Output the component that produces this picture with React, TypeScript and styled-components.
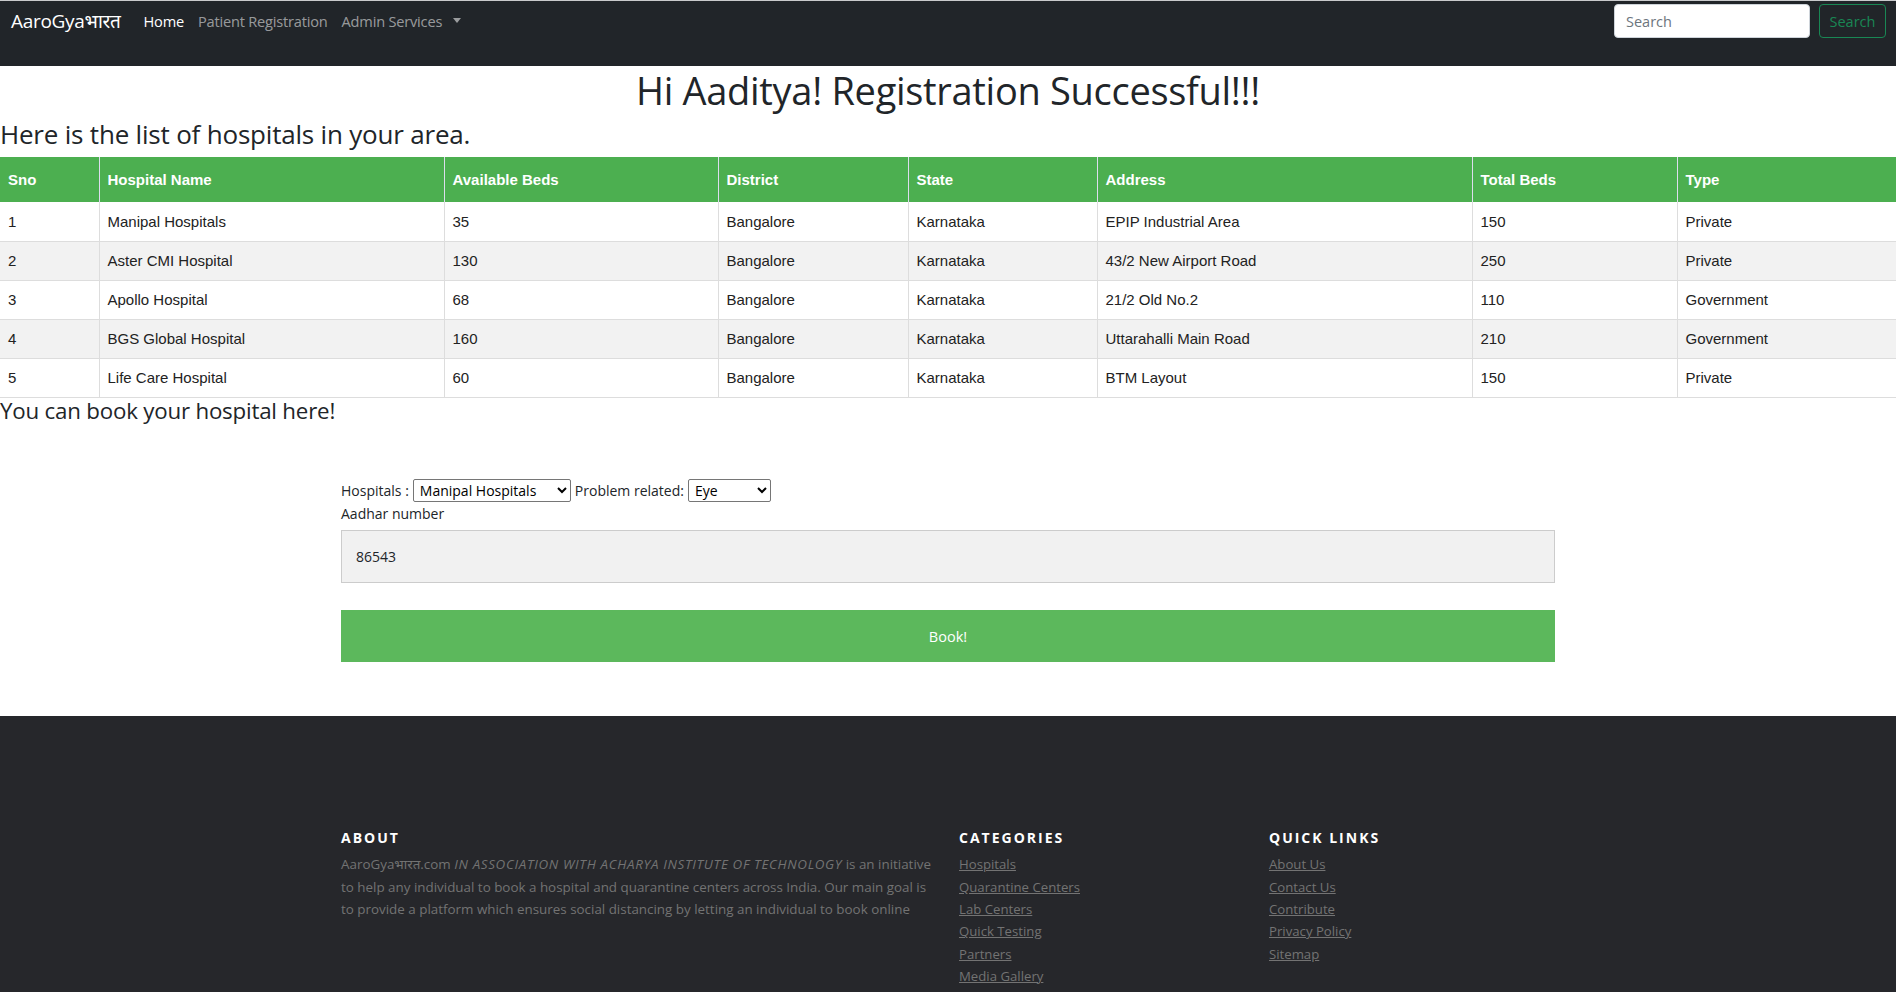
import React from "react";
import styled, { createGlobalStyle } from "styled-components";

const GlobalStyle = createGlobalStyle`
  body {
    margin: 0;
    font-family: "Open Sans", "Noto Sans", Arial, sans-serif;
    color: #212529;
    background: #fff;
    overflow: hidden;
  }
  * { box-sizing: border-box; }
`;

const Navbar = styled.nav`
  height: 66px;
  background: #212529;
  border-top: 1px solid #c9cacc;
  display: flex;
  align-items: flex-start;
  padding: 3px 10px 0 11px;
`;

const Brand = styled.a`
  color: #fff;
  font-size: 19px;
  line-height: 34px;
  margin-right: 16px;
  text-decoration: none;
  letter-spacing: -0.3px;
`;

const NavList = styled.ul`
  display: flex;
  list-style: none;
  margin: 0;
  padding: 0;
`;

const NavLink = styled.a<{ $active?: boolean }>`
  display: flex;
  align-items: center;
  gap: 11px;
  padding: 0 7px;
  line-height: 34px;
  font-size: 14.6px;
  letter-spacing: -0.2px;
  color: ${(p) => (p.$active ? "#fff" : "rgba(255,255,255,0.55)")};
  text-decoration: none;
`;

const Caret = styled.span`
  display: inline-block;
  border-top: 5px solid rgba(255, 255, 255, 0.55);
  border-left: 4.5px solid transparent;
  border-right: 4.5px solid transparent;
  margin-top: -2px;
`;

const SearchForm = styled.form`
  margin-left: auto;
  display: flex;
  gap: 9px;
`;

const SearchInput = styled.input`
  width: 196px;
  height: 34px;
  border: 1px solid #ced4da;
  border-radius: 4px;
  padding: 0 11px;
  font-family: "Open Sans", sans-serif;
  font-size: 14.5px;
  color: #212529;
  &::placeholder { color: #6c757d; }
`;

const SearchButton = styled.button`
  width: 67px;
  height: 34px;
  border: 1px solid #198754;
  border-radius: 4px;
  background: transparent;
  color: #198754;
  font-family: "Open Sans", sans-serif;
  font-size: 14.5px;
`;

const Title = styled.h1`
  text-align: center;
  font-size: 38px;
  font-weight: 500;
  line-height: 48px;
  margin: 0 0 5px;
  letter-spacing: -0.3px;
`;

const SubTitle = styled.h3<{ $size: number }>`
  font-size: ${(p) => p.$size}px;
  font-weight: 500;
  line-height: 1.2;
  margin: 0;
  letter-spacing: -0.2px;
`;

const Table = styled.table`
  width: 100%;
  border-collapse: collapse;
  margin-top: 7px;
  font-family: "Liberation Sans", Arial, sans-serif;
  font-size: 15px;
  table-layout: fixed;
`;

const Col = styled.col<{ $w: number }>`
  width: ${(p) => p.$w}px;
`;

const Th = styled.th`
  background: #4caf50;
  color: #fff;
  text-align: left;
  font-weight: 700;
  padding: 0 8px;
  height: 45px;
  border-left: 1px solid #dde;
  &:first-child { border-left: none; }
`;

const Tr = styled.tr`
  &:nth-child(even) { background: #f2f2f2; }
  border-bottom: 1px solid #ddd;
`;

const Td = styled.td`
  padding: 0 8px;
  height: 39px;
  border-left: 1px solid #ddd;
  color: #222;
  &:first-child { border-left: none; }
`;

const BookSection = styled.section`
  width: 1214px;
  margin: 55px auto 0;
  padding-bottom: 54px;
  font-size: 14px;
`;

const FieldRow = styled.div`
  display: flex;
  align-items: center;
  gap: 4px;
  height: 23px;
`;

const Select = styled.select<{ $w: number }>`
  width: ${(p) => p.$w}px;
  height: 23px;
  font-family: "Open Sans", sans-serif;
  font-size: 14px;
  border: 1px solid #767676;
  border-radius: 2px;
  padding: 0 2px;
  background: #fff;
  color: #000;
`;

const Label = styled.div`
  line-height: 20px;
  margin: 2px 0 6px;
`;

const AadharInput = styled.input`
  width: 100%;
  height: 53px;
  background: #f1f1f1;
  border: 1px solid #ccc;
  padding: 0 14px;
  font-family: "Open Sans", sans-serif;
  font-size: 14px;
  color: #212529;
`;

const BookButton = styled.button`
  display: block;
  width: 100%;
  height: 52px;
  margin-top: 27px;
  background: #5cb85c;
  border: none;
  color: #fff;
  font-family: "Open Sans", sans-serif;
  font-size: 14.5px;
`;

const Footer = styled.footer`
  background: #26272b;
  padding: 112px 0 40px;
  color: #737373;
  font-size: 13.2px;
  line-height: 22.3px;
`;

const FooterGrid = styled.div`
  width: 1214px;
  margin: 0 auto;
  display: grid;
  grid-template-columns: 618px 310px 1fr;
`;

const FooterHeading = styled.h6`
  color: #fff;
  font-size: 14px;
  font-weight: 700;
  letter-spacing: 2px;
  text-transform: uppercase;
  line-height: 20px;
  margin: 0 0 5px;
`;

const AboutText = styled.p`
  margin: 0;
  white-space: nowrap;
  font-size: 13.4px;
  i { letter-spacing: 0.65px; }
`;

const LinkList = styled.ul`
  list-style: none;
  margin: 0;
  padding: 0;
`;

const FooterLink = styled.a`
  color: #737373;
  text-decoration: underline;
`;

const columns = [
  { name: "Sno", w: 99 },
  { name: "Hospital Name", w: 345 },
  { name: "Available Beds", w: 274 },
  { name: "District", w: 190 },
  { name: "State", w: 189 },
  { name: "Address", w: 375 },
  { name: "Total Beds", w: 205 },
  { name: "Type", w: 219 },
];

const hospitals = [
  ["1", "Manipal Hospitals", "35", "Bangalore", "Karnataka", "EPIP Industrial Area", "150", "Private"],
  ["2", "Aster CMI Hospital", "130", "Bangalore", "Karnataka", "43/2 New Airport Road", "250", "Private"],
  ["3", "Apollo Hospital", "68", "Bangalore", "Karnataka", "21/2 Old No.2", "110", "Government"],
  ["4", "BGS Global Hospital", "160", "Bangalore", "Karnataka", "Uttarahalli Main Road", "210", "Government"],
  ["5", "Life Care Hospital", "60", "Bangalore", "Karnataka", "BTM Layout", "150", "Private"],
];

const categories = ["Hospitals", "Quarantine Centers", "Lab Centers", "Quick Testing", "Partners", "Media Gallery"];
const quickLinks = ["About Us", "Contact Us", "Contribute", "Privacy Policy", "Sitemap"];

const App: React.FC = () => {
  return (
    <>
      <GlobalStyle />
      <Navbar>
        <Brand href="#">AaroGyaभारत</Brand>
        <NavList>
          <li><NavLink $active href="#">Home</NavLink></li>
          <li><NavLink href="#">Patient Registration</NavLink></li>
          <li>
            <NavLink href="#">
              Admin Services <Caret />
            </NavLink>
          </li>
        </NavList>
        <SearchForm onSubmit={(e) => e.preventDefault()}>
          <SearchInput placeholder="Search" />
          <SearchButton type="submit">Search</SearchButton>
        </SearchForm>
      </Navbar>

      <Title>Hi Aaditya! Registration Successful!!!</Title>
      <SubTitle $size={26}>Here is the list of hospitals in your area.</SubTitle>

      <Table>
        <colgroup>
          {columns.map((c) => (
            <Col key={c.name} $w={c.w} />
          ))}
        </colgroup>
        <thead>
          <tr>
            {columns.map((c) => (
              <Th key={c.name}>{c.name}</Th>
            ))}
          </tr>
        </thead>
        <tbody>
          {hospitals.map((row) => (
            <Tr key={row[0]}>
              {row.map((cell, i) => (
                <Td key={i}>{cell}</Td>
              ))}
            </Tr>
          ))}
        </tbody>
      </Table>

      <SubTitle $size={22.3}>You can book your hospital here!</SubTitle>

      <BookSection>
        <FieldRow>
          Hospitals :
          <Select $w={158} defaultValue="Manipal Hospitals">
            {hospitals.map((h) => (
              <option key={h[0]}>{h[1]}</option>
            ))}
          </Select>
          Problem related:
          <Select $w={83} defaultValue="Eye">
            <option>Eye</option>
            <option>Heart</option>
            <option>Bone</option>
          </Select>
        </FieldRow>
        <Label>Aadhar number</Label>
        <AadharInput defaultValue="86543" />
        <BookButton>Book!</BookButton>
      </BookSection>

      <Footer>
        <FooterGrid>
          <div>
            <FooterHeading>About</FooterHeading>
            <AboutText>
              AaroGyaभारत.com <i>IN ASSOCIATION WITH ACHARYA INSTITUTE OF TECHNOLOGY</i> is an
              initiative
              <br />
              to help any individual to book a hospital and quarantine centers across India. Our
              main goal is
              <br />
              to provide a platform which ensures social distancing by letting an individual to
              book online
            </AboutText>
          </div>
          <div>
            <FooterHeading>Categories</FooterHeading>
            <LinkList>
              {categories.map((c) => (
                <li key={c}><FooterLink href="#">{c}</FooterLink></li>
              ))}
            </LinkList>
          </div>
          <div>
            <FooterHeading>Quick Links</FooterHeading>
            <LinkList>
              {quickLinks.map((c) => (
                <li key={c}><FooterLink href="#">{c}</FooterLink></li>
              ))}
            </LinkList>
          </div>
        </FooterGrid>
      </Footer>
    </>
  );
};

export default App;
